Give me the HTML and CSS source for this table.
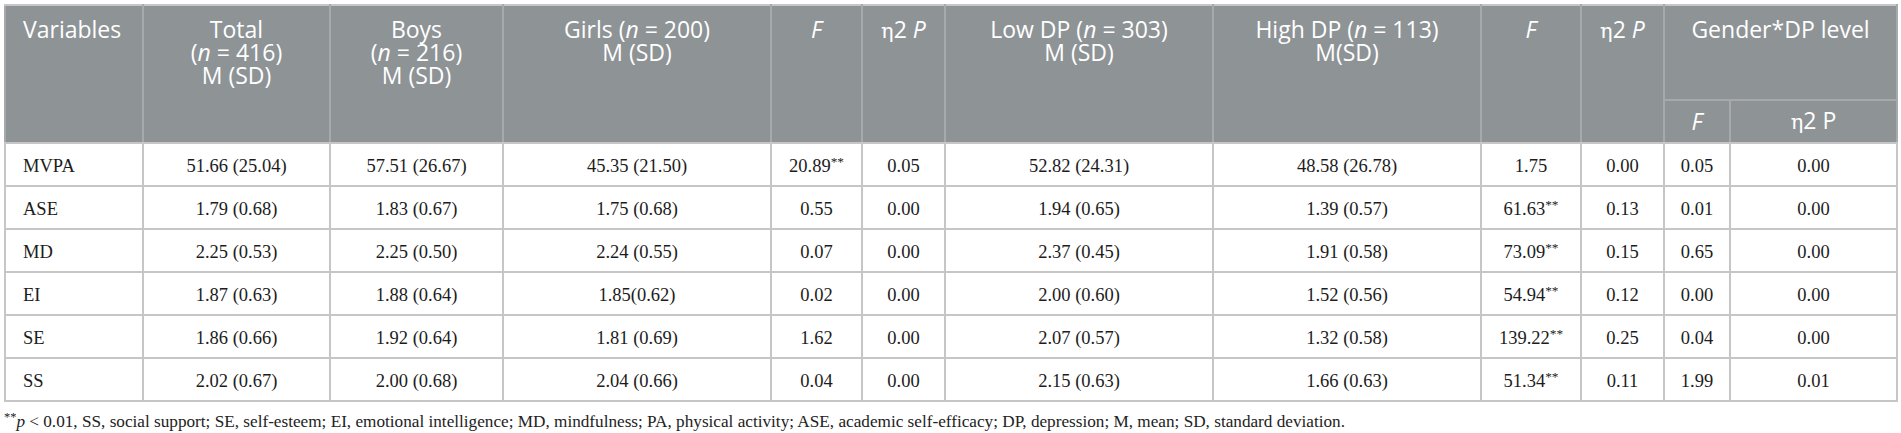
FILE: index.html
```html
<!DOCTYPE html>
<html lang="en">
<head>
<meta charset="utf-8">
<title>Table</title>
<link rel="stylesheet" href="styles.css">
</head>
<body>
<div class="page">
  <table class="data">
    <colgroup>
      <col class="w-var"><col class="w-total"><col class="w-boys"><col class="w-girls">
      <col class="w-f1"><col class="w-e1"><col class="w-low"><col class="w-high">
      <col class="w-f2"><col class="w-e2"><col class="w-f3"><col class="w-e3">
    </colgroup>
    <thead>
      <tr class="hr1">
        <th class="var" rowspan="2">Variables</th>
        <th rowspan="2">Total<br>(<i>n</i> = 416)<br>M (SD)</th>
        <th rowspan="2">Boys<br>(<i>n</i> = 216)<br>M (SD)</th>
        <th rowspan="2">Girls (<i>n</i> = 200)<br>M (SD)</th>
        <th rowspan="2"><i>F</i></th>
        <th rowspan="2"><span class="eta">η</span>2 <i>P</i></th>
        <th rowspan="2">Low DP (<i>n</i> = 303)<br>M (SD)</th>
        <th rowspan="2">High DP (<i>n</i> = 113)<br>M(SD)</th>
        <th rowspan="2"><i>F</i></th>
        <th rowspan="2"><span class="eta">η</span>2 <i>P</i></th>
        <th colspan="2" class="grp">Gender*DP level</th>
      </tr>
      <tr class="hr2">
        <th><i>F</i></th>
        <th><span class="eta">η</span>2 P</th>
      </tr>
    </thead>
    <tbody>
      <tr><td class="var">MVPA</td><td>51.66 (25.04)</td><td>57.51 (26.67)</td><td>45.35 (21.50)</td><td>20.89<sup>**</sup></td><td>0.05</td><td>52.82 (24.31)</td><td>48.58 (26.78)</td><td>1.75</td><td>0.00</td><td>0.05</td><td>0.00</td></tr>
      <tr><td class="var">ASE</td><td>1.79 (0.68)</td><td>1.83 (0.67)</td><td>1.75 (0.68)</td><td>0.55</td><td>0.00</td><td>1.94 (0.65)</td><td>1.39 (0.57)</td><td>61.63<sup>**</sup></td><td>0.13</td><td>0.01</td><td>0.00</td></tr>
      <tr><td class="var">MD</td><td>2.25 (0.53)</td><td>2.25 (0.50)</td><td>2.24 (0.55)</td><td>0.07</td><td>0.00</td><td>2.37 (0.45)</td><td>1.91 (0.58)</td><td>73.09<sup>**</sup></td><td>0.15</td><td>0.65</td><td>0.00</td></tr>
      <tr><td class="var">EI</td><td>1.87 (0.63)</td><td>1.88 (0.64)</td><td>1.85(0.62)</td><td>0.02</td><td>0.00</td><td>2.00 (0.60)</td><td>1.52 (0.56)</td><td>54.94<sup>**</sup></td><td>0.12</td><td>0.00</td><td>0.00</td></tr>
      <tr><td class="var">SE</td><td>1.86 (0.66)</td><td>1.92 (0.64)</td><td>1.81 (0.69)</td><td>1.62</td><td>0.00</td><td>2.07 (0.57)</td><td>1.32 (0.58)</td><td>139.22<sup>**</sup></td><td>0.25</td><td>0.04</td><td>0.00</td></tr>
      <tr><td class="var">SS</td><td>2.02 (0.67)</td><td>2.00 (0.68)</td><td>2.04 (0.66)</td><td>0.04</td><td>0.00</td><td>2.15 (0.63)</td><td>1.66 (0.63)</td><td>51.34<sup>**</sup></td><td>0.11</td><td>1.99</td><td>0.01</td></tr>
    </tbody>
  </table>
  <p class="note"><sup>**</sup><i>p</i> &lt; 0.01, SS, social support; SE, self-esteem; EI, emotional intelligence; MD, mindfulness; PA, physical activity; ASE, academic self-efficacy; DP, depression; M, mean; SD, standard deviation.</p>
</div>
</body>
</html>
```

FILE: styles.css
```css
html, body {
  margin: 0;
  padding: 0;
  background: #ffffff;
}

.page {
  padding: 4px 5px 0 4px;
}

.data {
  width: 1892px;
  table-layout: fixed;
  border-collapse: collapse;
  border: 2px solid #c6c6c6;
}

.w-var { width: 138px; }
.w-total { width: 187px; }
.w-boys { width: 173px; }
.w-girls { width: 268px; }
.w-f1 { width: 91px; }
.w-e1 { width: 83px; }
.w-low { width: 268px; }
.w-high { width: 268px; }
.w-f2 { width: 100px; }
.w-e2 { width: 83px; }
.w-f3 { width: 66px; }
.w-e3 { width: 167px; }

.data th {
  background: #8e9396;
  color: #ffffff;
  font-family: "Open Sans", "Noto Sans", sans-serif;
  font-weight: 400;
  font-size: 23px;
  line-height: 23px;
  text-align: center;
  vertical-align: top;
  padding: 12px 6px 0;
  border: 2px solid #a6aaad;
  border-top-color: #c6c6c6;
  border-bottom-color: #c6c6c6;
}

.data th.var {
  text-align: left;
  padding-left: 17px;
}

.hr1 { height: 95px; }

.data .hr2 th {
  vertical-align: middle;
  padding: 0 6px;
  border-top-color: #a6aaad;
}

.data .hr1 th.grp {
  border-bottom-color: #a6aaad;
}

.hr2 { height: 43px; }

.eta {
  font-family: "DejaVu Serif", "Liberation Serif", serif;
  font-size: 21px;
}

.data tbody tr {
  height: 43px;
}

.data td {
  font-family: "Liberation Serif", "Times New Roman", serif;
  font-size: 18.5px;
  line-height: 22px;
  color: #1c1c1c;
  text-align: center;
  vertical-align: middle;
  padding: 3px 6px 0;
  border: 2px solid #c6c6c6;
}

.data td.var {
  text-align: left;
  padding-left: 17px;
}

sup {
  font-size: 0.72em;
  line-height: 0;
  vertical-align: 0.45em;
}

.note {
  margin: 10px 0 0;
  font-family: "Liberation Serif", "Times New Roman", serif;
  font-size: 17.2px;
  line-height: 20px;
  color: #222;
}
```
